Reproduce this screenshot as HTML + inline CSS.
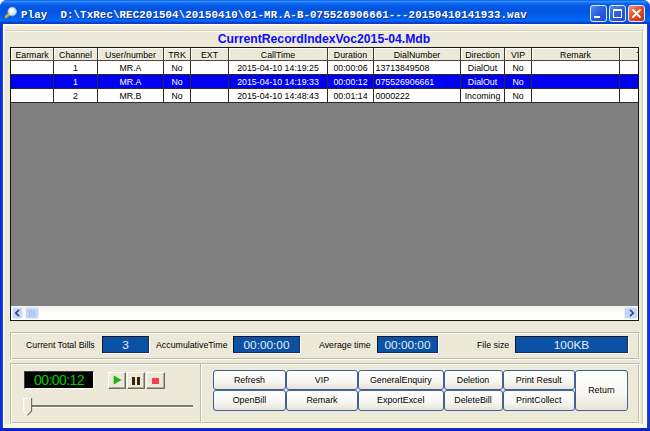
<!DOCTYPE html>
<html>
<head>
<meta charset="utf-8">
<title>Play</title>
<style>
*{box-sizing:border-box;margin:0;padding:0}
html,body{width:650px;height:431px;overflow:hidden;background:#fff}
body{position:relative;font-family:"Liberation Sans",sans-serif;font-size:8.8px;color:#000}
.abs{position:absolute}
#win{left:0;top:0;width:650px;height:431px;background:linear-gradient(90deg,#0a22d6 0,#1350e6 3px,#1350e6 647px,#0a22d6 650px);border-radius:7px 7px 0 0}
#wbot{left:0;top:427px;width:650px;height:4px;background:linear-gradient(180deg,#1648e2 0,#0c2ad0 1.5px,#081cb8 4px)}
#tbar{left:0;top:0;width:650px;height:25px;background:linear-gradient(180deg,#0a5ae0 0,#2f8cff 1.5px,#0a68f0 3.5px,#0458e2 6px,#0055e0 12px,#0260f0 17px,#0468f8 20.5px,#0a50dd 22px,#0a3cc8 23px,#0a3cc8 24px);border-radius:7px 7px 0 0}
#ttext{left:21px;top:6.5px;height:16px;line-height:16px;color:#fff;font-family:"Liberation Mono",monospace;font-weight:bold;font-size:10.8px;white-space:pre;letter-spacing:0.09px;text-shadow:1px 1px 0 #0a2a8c}
#client{left:3.1px;top:24.3px;width:644px;height:403.3px;background:#fdf9dc}
#cin{left:4px;top:26px;width:640.4px;height:398.3px;background:#ece9d8}
.tb{top:5px;width:17px;height:17px;border:1px solid #e4ebfb;border-radius:3px;background:linear-gradient(135deg,#4f8af5 0%,#2a5fdd 50%,#1d4dc9 100%)}
#bclose{background:linear-gradient(135deg,#f0906e 0%,#e2532c 45%,#c2300c 100%)}
#gtitle{left:3px;top:31px;width:642px;text-align:center;color:#0c0cf8;font-weight:bold;font-size:12.2px;line-height:16px;white-space:pre}
#grid{left:10px;top:47px;width:629px;height:274px;overflow:hidden;background:#808080;border:1px solid #151515}
#grid table{border-collapse:separate;border-spacing:0;table-layout:fixed;width:627px;position:absolute;left:0;top:0;font-size:8.8px}
#grid td,#grid th{border-right:1px solid #2a2a2a;border-bottom:1px solid #2a2a2a;height:14px;line-height:12px;text-align:center;background:#fff;font-weight:normal;white-space:nowrap;overflow:hidden;padding:1px 0 0 0}
#grid th{height:13px;line-height:10.4px;padding-top:1.6px;background:#ece9d8;border-right:1px solid #3c3c38;border-bottom:1px solid #4a4a44;box-shadow:inset 1px 1px 0 #fff}
#grid tr.sel td{background:#0000f0;color:#fff}
#grid td.l{text-align:left;padding-left:1.5px}
#hs{left:0px;top:258px;width:627px;height:14px;background:linear-gradient(180deg,#f3f1ec 0%,#fdfdfb 50%,#fefefe 100%)}
.sbtn{top:1px;width:13px;height:12px;border-radius:2px;background:#c6d5fb;border:1px solid #e6edfd}
.panel{border:1px solid;border-color:#bdbaa9 #fcfbf6 #fcfbf6 #bdbaa9;box-shadow:inset 1px 1px 0 #fcfbf6, inset -1px -1px 0 #bdbaa9}
.lbl{white-space:pre;line-height:12px;height:12px}
.bx{background:#0b52a4;border:1px solid;border-color:#0c1626 #14305c #14305c #0c1626;box-shadow:1px 1px 0 #fff;color:#e4ecfa;text-align:center;font-size:11.8px;line-height:16.5px;height:17px;top:336px}
.btn{font-size:8.9px;border:1px solid #3f6197;border-radius:3px;background:linear-gradient(180deg,#fff 0%,#f7f6f1 60%,#e6e3d6 100%);text-align:center;white-space:pre;height:20px;line-height:19px}
.mb{top:372px;width:18px;height:17px;border:1px solid;border-color:#fff #716f64 #716f64 #fff;background:#ece9d8;box-shadow:inset -1px -1px 0 #aca899}
</style>
</head>
<body>
<div id="win" class="abs"></div>
<div id="tbar" class="abs"></div>
<svg class="abs" style="left:3px;top:4px" width="17" height="17" viewBox="0 0 17 17">
<line x1="3.2" y1="12.8" x2="5.6" y2="10.6" stroke="#f2a51a" stroke-width="2.8" stroke-linecap="round"/>
<circle cx="9.2" cy="7.5" r="4.3" fill="#d5e9fb" stroke="#8fb8ee" stroke-width="0.8"/>
<circle cx="8.6" cy="6.6" r="2.4" fill="#ffffff"/>
</svg>
<div id="ttext" class="abs">Play  D:\TxRec\REC201504\20150410\01-MR.A-B-075526906661---20150410141933.wav</div>
<div class="abs tb" style="left:590px"><div class="abs" style="left:3px;top:10px;width:6px;height:2px;background:#fff"></div></div>
<div class="abs tb" style="left:609px"><div class="abs" style="left:3px;top:3px;width:9px;height:9px;border:1px solid #fff;border-top-width:2px"></div></div>
<div class="abs tb" id="bclose" style="left:628px"><svg class="abs" style="left:2px;top:2px" width="11" height="11" viewBox="0 0 11 11"><path d="M2 2 L9 9 M9 2 L2 9" stroke="#fff" stroke-width="1.9" stroke-linecap="round"/></svg></div>

<div id="wbot" class="abs"></div>
<div id="client" class="abs"></div>
<div id="cin" class="abs"></div>

<div class="abs" style="left:4px;top:30px;width:640px;height:394px;border:solid #d2cfbd;border-width:1px 0 0 0;box-shadow:inset 0 1px 0 #fbfaf4"></div>
<div class="abs" style="left:642px;top:30px;width:2px;height:394px;background:linear-gradient(90deg,#c8c4b0 0,#c8c4b0 1px,#fff 1px,#fff 2px)"></div>
<div class="abs" style="left:4px;top:26px;width:1px;height:398px;background:#f8f6ec"></div>
<div id="gtitle" class="abs">CurrentRecordIndexVoc2015-04.Mdb</div>

<div id="grid" class="abs">
<table>
<colgroup><col style="width:43px"><col style="width:44px"><col style="width:66px"><col style="width:27px"><col style="width:38px"><col style="width:99px"><col style="width:46px"><col style="width:87px"><col style="width:44px"><col style="width:27px"><col style="width:88px"><col style="width:18px"></colgroup>
<tr><th>Earmark</th><th>Channel</th><th>User/number</th><th>TRK</th><th>EXT</th><th>CallTime</th><th>Duration</th><th>DialNumber</th><th>Direction</th><th>VIP</th><th>Remark</th><th style="border-right:0;text-align:left;padding-left:16.5px">T</th></tr>
<tr><td></td><td>1</td><td>MR.A</td><td>No</td><td></td><td>2015-04-10 14:19:25</td><td>00:00:06</td><td class="l">13713849508</td><td>DialOut</td><td>No</td><td></td><td style="border-right:0"></td></tr>
<tr class="sel"><td></td><td>1</td><td>MR.A</td><td>No</td><td></td><td>2015-04-10 14:19:33</td><td>00:00:12</td><td class="l">075526906661</td><td>DialOut</td><td>No</td><td></td><td style="border-right:0"></td></tr>
<tr><td></td><td>2</td><td>MR.B</td><td>No</td><td></td><td>2015-04-10 14:48:43</td><td>00:01:14</td><td class="l">0000222</td><td>Incoming</td><td>No</td><td></td><td style="border-right:0"></td></tr>
</table>
<div id="hs" class="abs">
<div class="abs sbtn" style="left:0.8px;width:11.5px"><svg class="abs" style="left:1.5px;top:1.2px" width="7" height="8" viewBox="0 0 7 8"><path d="M5 0.8 L1.8 4 L5 7.2" fill="none" stroke="#36466e" stroke-width="1.7"/></svg></div>
<div class="abs sbtn" style="left:14.3px;width:13.3px"><svg class="abs" style="left:2px;top:1.7px" width="8" height="7" viewBox="0 0 8 7"><path d="M1.5 0 V7 M3.8 0 V7 M6.1 0 V7" stroke="#9db4ee" stroke-width="0.9"/></svg></div>
<div class="abs sbtn" style="left:613px;width:13.5px"><svg class="abs" style="left:2.5px;top:1.2px" width="7" height="8" viewBox="0 0 7 8"><path d="M2 0.8 L5.2 4 L2 7.2" fill="none" stroke="#36466e" stroke-width="1.7"/></svg></div>
</div>
</div>

<div class="abs panel" style="left:10px;top:332px;width:630px;height:28px"></div>
<div class="abs lbl" style="left:26px;top:339px">Current Total Bills</div>
<div class="abs bx" style="left:102px;width:47px">3</div>
<div class="abs lbl" style="left:156px;top:339px">AccumulativeTime</div>
<div class="abs bx" style="left:233px;width:67px">00:00:00</div>
<div class="abs lbl" style="left:319px;top:339px">Average time</div>
<div class="abs bx" style="left:377px;width:61px">00:00:00</div>
<div class="abs lbl" style="left:477px;top:339px">File size</div>
<div class="abs bx" style="left:515px;width:113px">100KB</div>

<div class="abs panel" style="left:10px;top:363px;width:630px;height:61px"></div>
<div class="abs" style="left:200px;top:364px;width:2px;height:59px;background:linear-gradient(90deg,#bdbaa9 0,#bdbaa9 1px,#fcfbf6 1px,#fcfbf6 2px)"></div>
<div class="abs" style="left:24px;top:371px;width:70px;height:18px;background:#000;border:1px solid;border-color:#404040 #fff #fff #404040;color:#00cc00;font-size:14px;line-height:16px;text-align:center;letter-spacing:-0.55px">00:00:12</div>
<div class="abs mb" style="left:108px"><svg class="abs" style="left:4.3px;top:2px" width="10" height="10" viewBox="0 0 10 10"><path d="M0.6 0.4 L8.6 5 L0.6 9.6 Z" fill="#22b014"/></svg></div>
<div class="abs mb" style="left:127px"><div class="abs" style="left:4.3px;top:3.5px;width:3.1px;height:8.2px;background:#3a2206"></div><div class="abs" style="left:9.3px;top:3.5px;width:3.2px;height:8.2px;background:#3a2206"></div></div>
<div class="abs mb" style="left:146px;width:19px"><div class="abs" style="left:5.2px;top:4.7px;width:6.5px;height:6.5px;background:#fb3c4a"></div></div>
<div class="abs" style="left:31px;top:405px;width:162px;height:3px;background:#807c6a;border-bottom:1px solid #fff"></div>
<svg class="abs" style="left:22px;top:397px" width="12" height="20" viewBox="0 0 12 20"><path d="M1.5 1.5 H9.5 V14 L5.5 18.3 L1.5 14 Z" fill="#ece9d8"/><path d="M9.5 1.5 H1.8 V14 L5.5 18" fill="none" stroke="#fff" stroke-width="1.2"/><path d="M9.6 1 V14 L5.5 18.4" fill="none" stroke="#6b6858" stroke-width="1.1"/></svg>

<div class="abs btn" style="left:213px;top:370px;width:73px">Refresh</div>
<div class="abs btn" style="left:213px;top:390px;width:73px;height:20.5px">OpenBill</div>
<div class="abs btn" style="left:286px;top:370px;width:72px">VIP</div>
<div class="abs btn" style="left:286px;top:390px;width:72px;height:20.5px">Remark</div>
<div class="abs btn" style="left:358px;top:370px;width:85.5px">GeneralEnquiry</div>
<div class="abs btn" style="left:358px;top:390px;width:85.5px;height:20.5px">ExportExcel</div>
<div class="abs btn" style="left:443.5px;top:370px;width:59px">Deletion</div>
<div class="abs btn" style="left:443.5px;top:390px;width:59px;height:20.5px">DeleteBill</div>
<div class="abs btn" style="left:502.5px;top:370px;width:72.5px">Print Result</div>
<div class="abs btn" style="left:502.5px;top:390px;width:72.5px;height:20.5px">PrintCollect</div>
<div class="abs btn" style="left:575px;top:370px;width:53px;height:40.5px;line-height:39.5px">Return</div>
</body>
</html>
